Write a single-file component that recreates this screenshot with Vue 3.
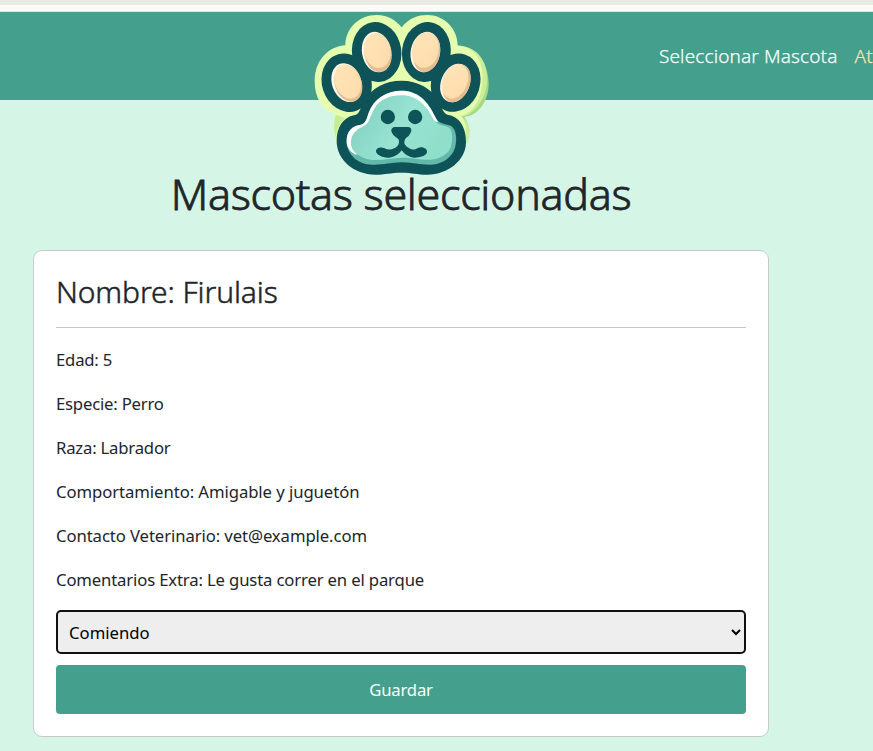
<script setup>
import { ref } from 'vue'

const pet = {
  name: 'Firulais',
  details: [
    ['Edad', '5', 'age'],
    ['Especie', 'Perro', 'species'],
    ['Raza', 'Labrador', 'breed'],
    ['Comportamiento', 'Amigable y juguetón', 'behavior'],
    ['Contacto Veterinario', 'vet@example.com', 'contact'],
    ['Comentarios Extra', 'Le gusta correr en el parque', 'comments'],
  ],
}
const activity = ref('Comiendo')
</script>

<template>
  <div class="page">
    <div class="chrome"></div>
    <header class="navbar">
      <nav class="links">
        <a class="link">Seleccionar Mascota</a>
        <a class="link active">Atender Mascota</a>
      </nav>
      <svg class="logo" viewBox="42 42 528 486" aria-hidden="true">
        <defs>
          <linearGradient id="face" x1="0" y1="0" x2="1" y2="0.4">
            <stop offset="0" stop-color="#7fcdbd" />
            <stop offset="0.6" stop-color="#98e3d2" />
            <stop offset="1" stop-color="#90dfcb" />
          </linearGradient>
          <linearGradient id="toe" x1="0" y1="0" x2="1" y2="1">
            <stop offset="0" stop-color="#ffe5b9" />
            <stop offset="1" stop-color="#fddbaa" />
          </linearGradient>
        </defs>
        <path fill="#a6d982" d="M465 135C526 136 567 190 566 253C565 309 531 348 493 351C512 378 512 403 498 429L440 350Z" />
        <path fill="#c9ef9a" d="M473 137C533 138 565 185 561 245C558 300 520 345 484 350C508 363 516 396 502 429L440 350Z" />
        <path fill="#e4fdae" d="M136 136C137 83 178 45 230 45C264 45 287 61 305 82C328 54 352 45 382 45C433 45 473 86 473 137C517 138 548 174 548 229C548 297 519 340 483 347C500 367 500 397 492 427L480 440H116L108 423C98 394 97 366 108 344C66 330 43 291 44 242C45 181 85 139 136 136Z" />
        <path fill="#c5ee94" d="M108 344Q97 371 106 414Q112 372 136 355Z" />
        <g fill="#0d5357">
          <ellipse cx="230" cy="156" rx="74" ry="90" transform="rotate(-8 230 156)" />
          <ellipse cx="379" cy="156" rx="73" ry="90" transform="rotate(8 379 156)" />
          <ellipse cx="140" cy="248" rx="74" ry="89" transform="rotate(-18 140 248)" />
          <ellipse cx="467" cy="248" rx="73" ry="89" transform="rotate(18 467 248)" />
          <path d="M190 302C218 263 254 242 305 242C354 242 395 266 416 302C426 326 430 342 449 346C484 354 499 391 498 428C497 480 445 523 382 524C348 524 339 518 305 518C270 518 257 524 226 524C161 523 111 479 110 425C109 382 130 352 162 346C180 342 181 325 190 302Z" />
        </g>
        <g fill="#fff8e8">
          <ellipse cx="229" cy="156" rx="43" ry="61" transform="rotate(-10 229 156)" />
          <ellipse cx="376" cy="156" rx="44" ry="61" transform="rotate(11 376 156)" />
          <ellipse cx="140" cy="248" rx="44" ry="60" transform="rotate(-20 140 248)" />
          <ellipse cx="466" cy="249" rx="43" ry="60" transform="rotate(22 466 249)" />
        </g>
        <g fill="#e5bd91">
          <ellipse cx="234" cy="159" rx="41" ry="58" transform="rotate(-10 234 159)" />
          <ellipse cx="380" cy="158" rx="40" ry="59" transform="rotate(11 380 158)" />
          <ellipse cx="145" cy="251" rx="40" ry="56" transform="rotate(-20 145 251)" />
          <ellipse cx="470" cy="250" rx="39" ry="59" transform="rotate(22 470 250)" />
        </g>
        <g fill="url(#toe)">
          <ellipse cx="232" cy="151" rx="40" ry="53" transform="rotate(-10 232 151)" />
          <ellipse cx="376" cy="150" rx="40" ry="54" transform="rotate(11 376 150)" />
          <ellipse cx="143" cy="245" rx="38" ry="53" transform="rotate(-20 143 245)" />
          <ellipse cx="465" cy="244" rx="37" ry="54" transform="rotate(22 465 244)" />
        </g>
        <path fill="#62b9a9" d="M206 338C222 295 260 272 305 272C353 272 384 304 403 346C414 372 433 372 452 377C469 386 472 417 465 443C455 476 421 494 389 494C354 494 345 488 305 487C268 488 250 495 217 494C174 493 144 466 140 428C138 392 159 378 179 375C198 371 200 356 206 338Z" />
        <path fill="#ffffff" d="M206 338C222 295 260 272 305 272C353 272 384 304 403 346L414 367L389 360L230 440L167 464C150 455 141 442 140 428C138 392 159 378 179 375C198 371 200 356 206 338Z" />
        <path fill="url(#face)" d="M215 342C230 303 262 286 305 286C350 286 379 317 396 350C408 378 432 374 448 383C461 397 458 436 447 452C429 473 405 480 377 479C347 478 341 473 305 473C272 474 247 482 211 479C181 475 157 457 153 435C150 404 170 389 184 382C205 373 207 360 215 342Z" />
        <g fill="#0d5357">
          <circle cx="263.500" cy="351" r="21.500" />
          <circle cx="345.500" cy="351" r="21.500" />
          <path d="M286 381H323C333 381 337 389 332 398Q328 407 319 413C313 418 313 424 313 430Q317 441 332 447Q344 451 352 445C367 437 383 447 381 457C379 468 357 474 341 473Q318 470 305 451Q292 470 268 473C249 475 228 464 228 454C228 443 243 439 254 445Q264 451 277 447Q295 441 297 428C298 418 294 416 288 412Q279 407 276 398C271 389 276 381 286 381Z" />
        </g>
      </svg>
    </header>

    <main class="content">
      <h1 class="title"><span>Mascotas seleccionadas</span></h1>
      <section class="card">
        <h2 class="name"><span>Nombre: {{ pet.name }}</span></h2>
        <hr class="divider" />
        <p v-for="[label, value, key] in pet.details" :key="key" class="detail" :class="key">
          <span>{{ label }}: {{ value }}</span>
        </p>
        <div class="field">
          <select v-model="activity" class="select">
            <option>Comiendo</option>
            <option>Durmiendo</option>
            <option>Jugando</option>
          </select>
        </div>
        <button class="save" type="button">Guardar</button>
      </section>
    </main>
  </div>
</template>

<style>
body {
  margin: 0;
  background: #d5f5e7;
}
</style>

<style scoped>
.page {
  box-sizing: border-box;
  height: 751px;
  overflow: hidden;
  background: #d5f5e7;
  color: #212529;
  font-family: "Segoe UI", "Noto Sans", sans-serif;
  font-size: 16.7px;
  line-height: 26px;
}
.chrome {
  box-sizing: border-box;
  height: 12px;
  border-top: 5px solid #e9eae3;
  border-bottom: 1px solid #e2e6e2;
  background: #fbfaf6;
}
.navbar {
  position: relative;
  height: 88px;
  background: #459f8d;
}
.links {
  display: flex;
  gap: 17px;
  height: 88px;
  padding-left: 659px;
  align-items: center;
}
.link {
  flex-shrink: 0;
  color: #f5fffb;
  font-size: 19px;
  font-weight: 300;
  letter-spacing: 0.13px;
  white-space: nowrap;
  -webkit-text-stroke: 0.25px currentColor;
}
.link.active {
  color: #ffe5a9;
}
.logo {
  position: absolute;
  left: 314px;
  top: 2px;
  width: 176px;
  height: 162px;
}
.content {
  width: 736px;
  padding: 67px 0 0 33px;
}
.title {
  margin: 0 0 30px;
  font-size: 43px;
  font-weight: 300;
  line-height: 53px;
  text-align: center;
  letter-spacing: -0.3px;
  -webkit-text-stroke: 0.8px currentColor;
}
.card {
  box-sizing: border-box;
  width: 736px;
  height: 487px;
  padding: 22px;
  border: 1px solid #c5cbc8;
  border-radius: 9px;
  background: #fff;
}
.name {
  margin: 0;
  font-size: 30px;
  font-weight: 300;
  line-height: 38px;
  letter-spacing: -0.1px;
  -webkit-text-stroke: 0.5px currentColor;
}
.divider {
  margin: 16px 0 19px;
  border: 0;
  border-top: 1px solid #c7c8c9;
}
.detail {
  margin: 0 0 18px;
  letter-spacing: -0.2px;
}
.detail.behavior {
  letter-spacing: -0.07px;
}
.detail.contact {
  letter-spacing: -0.09px;
}
.detail.comments {
  margin-bottom: 17px;
  letter-spacing: -0.15px;
}
.field {
  display: flex;
  margin-bottom: 11px;
}
.select {
  box-sizing: border-box;
  width: 100%;
  height: 44px;
  padding: 0 0 0 7px;
  border: 2px solid #101010;
  border-radius: 5px;
  outline: none;
  background: #eee;
  color: #000;
  font: inherit;
  letter-spacing: 0;
}
.save {
  display: block;
  width: 100%;
  height: 49px;
  padding: 0;
  border: 0;
  border-radius: 4px;
  background: #459f8d;
  color: #f5fffb;
  font: inherit;
  letter-spacing: -0.2px;
}
</style>
